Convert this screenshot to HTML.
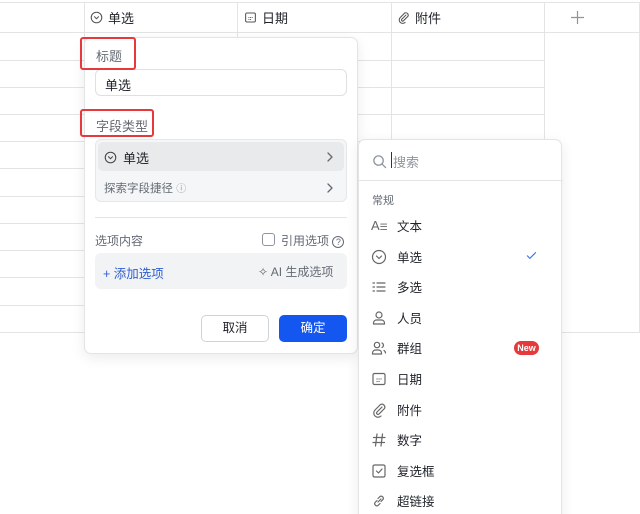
<!DOCTYPE html>
<html><head><meta charset="utf-8"><style>
*{box-sizing:border-box;margin:0;padding:0}
html,body{width:640px;height:514px;overflow:hidden}
body{background:#fff;font-family:"Liberation Sans","Noto Sans CJK SC",sans-serif;color:#1f2329;position:relative}
.a{position:absolute}
svg{stroke-linecap:round;stroke-linejoin:round}
.hl{position:absolute;height:1px;background:#e3e4e6}
.vl{position:absolute;width:1px;background:#e3e4e6}
.hd{position:absolute;top:8px;font-size:13px;display:flex;align-items:center;gap:5px;color:#1f2329}
.pop{position:absolute;background:#fff;border:1px solid #e3e4e6;border-radius:7px;box-shadow:0 4px 14px rgba(0,0,0,.08)}
.red{position:absolute;border:2px solid #e5393b;border-radius:3px}
.lbl{position:absolute;font-size:13px;color:#646a73}
.it{position:absolute;left:12px;font-size:12.5px;display:flex;align-items:center;gap:10px;color:#1f2329}
.it svg{width:16px;height:16px}
</style></head><body>
<div class="hl" style="left:0;top:2px;width:640px"></div>
<div class="hl" style="left:0;top:32px;width:640px"></div>
<div class="hl" style="left:0;top:332px;width:640px"></div>
<div class="vl" style="left:84px;top:2px;height:330px"></div>
<div class="vl" style="left:237px;top:2px;height:330px"></div>
<div class="vl" style="left:391px;top:2px;height:330px"></div>
<div class="vl" style="left:544px;top:2px;height:330px"></div>
<div class="vl" style="left:639px;top:2px;height:330px"></div>
<div class="hl" style="left:0;top:60px;width:544px"></div>
<div class="hl" style="left:0;top:87px;width:544px"></div>
<div class="hl" style="left:0;top:114px;width:544px"></div>
<div class="hl" style="left:0;top:141px;width:544px"></div>
<div class="hl" style="left:0;top:168px;width:544px"></div>
<div class="hl" style="left:0;top:196px;width:544px"></div>
<div class="hl" style="left:0;top:223px;width:544px"></div>
<div class="hl" style="left:0;top:250px;width:544px"></div>
<div class="hl" style="left:0;top:277px;width:544px"></div>
<div class="hl" style="left:0;top:305px;width:544px"></div>

<div class="hd" style="left:90px"><svg width="13" height="13" viewBox="0 0 16 16" fill="none" stroke="#555" stroke-width="1.3"><circle cx="8" cy="8" r="6.5"/><path d="M5.5 7l2.5 2.5 2.5-2.5"/></svg>单选</div>
<div class="hd" style="left:244px"><svg width="13" height="13" viewBox="0 0 16 16" fill="none" stroke="#555" stroke-width="1.3"><rect x="2" y="2.5" width="12" height="11" rx="1.5"/><path d="M6 8h.1M8 8h.1M10 8h.1M6 10.5h.1M8 10.5h.1"/></svg>日期</div>
<div class="hd" style="left:397px"><svg width="13" height="13" viewBox="0 0 16 16" fill="none" stroke="#555" stroke-width="1.3"><path d="M11 5l-5 5a1.4 1.4 0 002 2l5.5-5.5a3 3 0 00-4-4L4 8a4.2 4.2 0 006 6"/></svg>附件</div>
<svg class="a" style="left:571px;top:11px" width="13" height="13" viewBox="0 0 13 13" stroke="#8f959e" stroke-width="1.2"><path d="M6.5 0v13M0 6.5h13"/></svg>

<div class="pop" style="left:84px;top:37px;width:274px;height:317px">
 <div class="lbl" style="left:11px;top:8px">标题</div>
 <div class="a" style="left:10px;top:31px;width:252px;height:27px;border:1px solid #dee0e3;border-radius:6px;font-size:13px;padding:5px 9px">单选</div>
 <div class="lbl" style="left:11px;top:78px">字段类型</div>
 <div class="a" style="left:10px;top:101px;width:252px;height:63px;background:#f5f6f7;border:1px solid #e6e7e9;border-radius:6px">
  <div class="a" style="left:2px;top:2px;width:246px;height:29px;background:#e9eaec;border-radius:5px"></div>
  <div class="a" style="left:8px;top:8px;font-size:13px;display:flex;align-items:center;gap:6px"><svg width="13" height="13" viewBox="0 0 16 16" fill="none" stroke="#444" stroke-width="1.3"><circle cx="8" cy="8" r="6.5"/><path d="M5.5 7l2.5 2.5 2.5-2.5"/></svg>单选</div>
  <svg class="a" style="left:230px;top:12px" width="8" height="10" viewBox="0 0 8 10" fill="none" stroke="#646a73" stroke-width="1.3"><path d="M2 1l4 4-4 4"/></svg>
  <div class="a" style="left:8px;top:40px;font-size:11.5px;color:#646a73">探索字段捷径 <span style="font-size:10px;color:#999">ⓘ</span></div>
  <svg class="a" style="left:230px;top:43px" width="8" height="10" viewBox="0 0 8 10" fill="none" stroke="#646a73" stroke-width="1.3"><path d="M2 1l4 4-4 4"/></svg>
 </div>
 <div class="hl" style="left:10px;top:179px;width:252px"></div>
 <div class="lbl" style="left:10px;top:194px;font-size:12px">选项内容</div>
 <div class="a" style="left:177px;top:195px;width:13px;height:13px;border:1px solid #8f959e;border-radius:3px"></div>
 <div class="a" style="left:196px;top:194px;font-size:12px;color:#646a73">引用选项 <span style="display:inline-block;width:12px;height:12px;border:1px solid #646a73;border-radius:50%;font-size:9px;text-align:center;line-height:11px">?</span></div>
 <div class="a" style="left:10px;top:215px;width:252px;height:36px;background:#f2f3f5;border-radius:6px">
  <div class="a" style="left:8px;top:10px;font-size:12.5px;color:#2f5fd0">+ 添加选项</div>
  <div class="a" style="left:163px;top:10px;font-size:12px;color:#646a73">✧ AI 生成选项</div>
 </div>
 <div class="a" style="left:116px;top:277px;width:68px;height:27px;border:1px solid #d0d3d6;border-radius:5px;font-size:12.5px;text-align:center;line-height:25px">取消</div>
 <div class="a" style="left:194px;top:277px;width:68px;height:27px;background:#1456f0;border-radius:5px;font-size:12.5px;color:#fff;text-align:center;line-height:27px">确定</div>
</div>
<div class="red" style="left:80px;top:37px;width:56px;height:33px"></div>
<div class="red" style="left:80px;top:109px;width:74px;height:28px"></div>

<div class="pop" style="left:358px;top:139px;width:204px;height:390px">
 <svg class="a" style="left:13px;top:14px" width="15" height="15" viewBox="0 0 16 16" fill="none" stroke="#8f959e" stroke-width="1.4"><circle cx="7" cy="7" r="5"/><path d="M11 11l3.5 3.5"/></svg>
 <div class="a" style="left:32px;top:12px;width:1px;height:16px;background:#333"></div>
 <div class="a" style="left:34px;top:12px;font-size:13px;color:#8f959e">搜索</div>
 <div class="hl" style="left:0;top:40px;width:204px"></div>
 <div class="a" style="left:13px;top:52px;font-size:11px;color:#646a73">常规</div>
 <div class="it" style="top:76px"><span style="font-size:13px;color:#666;width:16px">A<span style="font-size:9px">☰</span></span>文本</div>
 <div class="it" style="top:107px"><svg viewBox="0 0 16 16" fill="none" stroke="#666" stroke-width="1.2"><circle cx="8" cy="8" r="6.5"/><path d="M5.5 7l2.5 2.5 2.5-2.5"/></svg>单选</div>
 <svg class="a" style="left:166px;top:109px" width="13" height="13" viewBox="0 0 16 16" fill="none" stroke="#3370ff" stroke-width="1.4"><path d="M3 8.5l3 3 7-7"/></svg>
 <div class="it" style="top:137px"><svg viewBox="0 0 16 16" fill="none" stroke="#666" stroke-width="1.2"><path d="M2 4h1.5M2 8h1.5M2 12h1.5M6 4h8M6 8h8M6 12h8"/></svg>多选</div>
 <div class="it" style="top:168px"><svg viewBox="0 0 16 16" fill="none" stroke="#666" stroke-width="1.2"><circle cx="8" cy="5" r="3"/><path d="M2.5 14v-1a3 3 0 013-3h5a3 3 0 013 3v1z"/></svg>人员</div>
 <div class="it" style="top:198px"><svg viewBox="0 0 16 16" fill="none" stroke="#666" stroke-width="1.2"><circle cx="6" cy="5" r="2.7"/><path d="M1.5 14v-1a3 3 0 013-3h3a3 3 0 013 3v1zM11 3a2.5 2.5 0 010 4.5M13 10.5a3 3 0 011.5 2.5"/></svg>群组</div>
 <div class="a" style="left:155px;top:201px;width:25px;height:14px;border-radius:7px;background:#e5393b;color:#fff;font-size:9px;font-weight:bold;text-align:center;line-height:14px">New</div>
 <div class="it" style="top:229px"><svg viewBox="0 0 16 16" fill="none" stroke="#666" stroke-width="1.2"><rect x="2" y="2.5" width="12" height="11" rx="1.5"/><path d="M6 8h.1M8 8h.1M10 8h.1M6 10.5h.1M8 10.5h.1"/></svg>日期</div>
 <div class="it" style="top:260px"><svg viewBox="0 0 16 16" fill="none" stroke="#666" stroke-width="1.2"><path d="M11 5l-5 5a1.4 1.4 0 002 2l5.5-5.5a3 3 0 00-4-4L4 8a4.2 4.2 0 006 6"/></svg>附件</div>
 <div class="it" style="top:290px"><svg viewBox="0 0 16 16" fill="none" stroke="#666" stroke-width="1.2"><path d="M6 2l-1.5 12M11.5 2L10 14M2.5 5.5h11.5M2 10.5h11.5"/></svg>数字</div>
 <div class="it" style="top:321px"><svg viewBox="0 0 16 16" fill="none" stroke="#666" stroke-width="1.2"><rect x="2" y="2" width="12" height="12" rx="1.5"/><path d="M5.5 8l2 2 3.5-4"/></svg>复选框</div>
 <div class="it" style="top:351px"><svg viewBox="0 0 16 16" fill="none" stroke="#666" stroke-width="1.2"><path d="M7 9l3-3M6 7.5L4 9.5a2.2 2.2 0 003 3L9 10.5M10 8.5l2-2a2.2 2.2 0 00-3-3L7 5.5"/></svg>超链接</div>
</div>
</body></html>
